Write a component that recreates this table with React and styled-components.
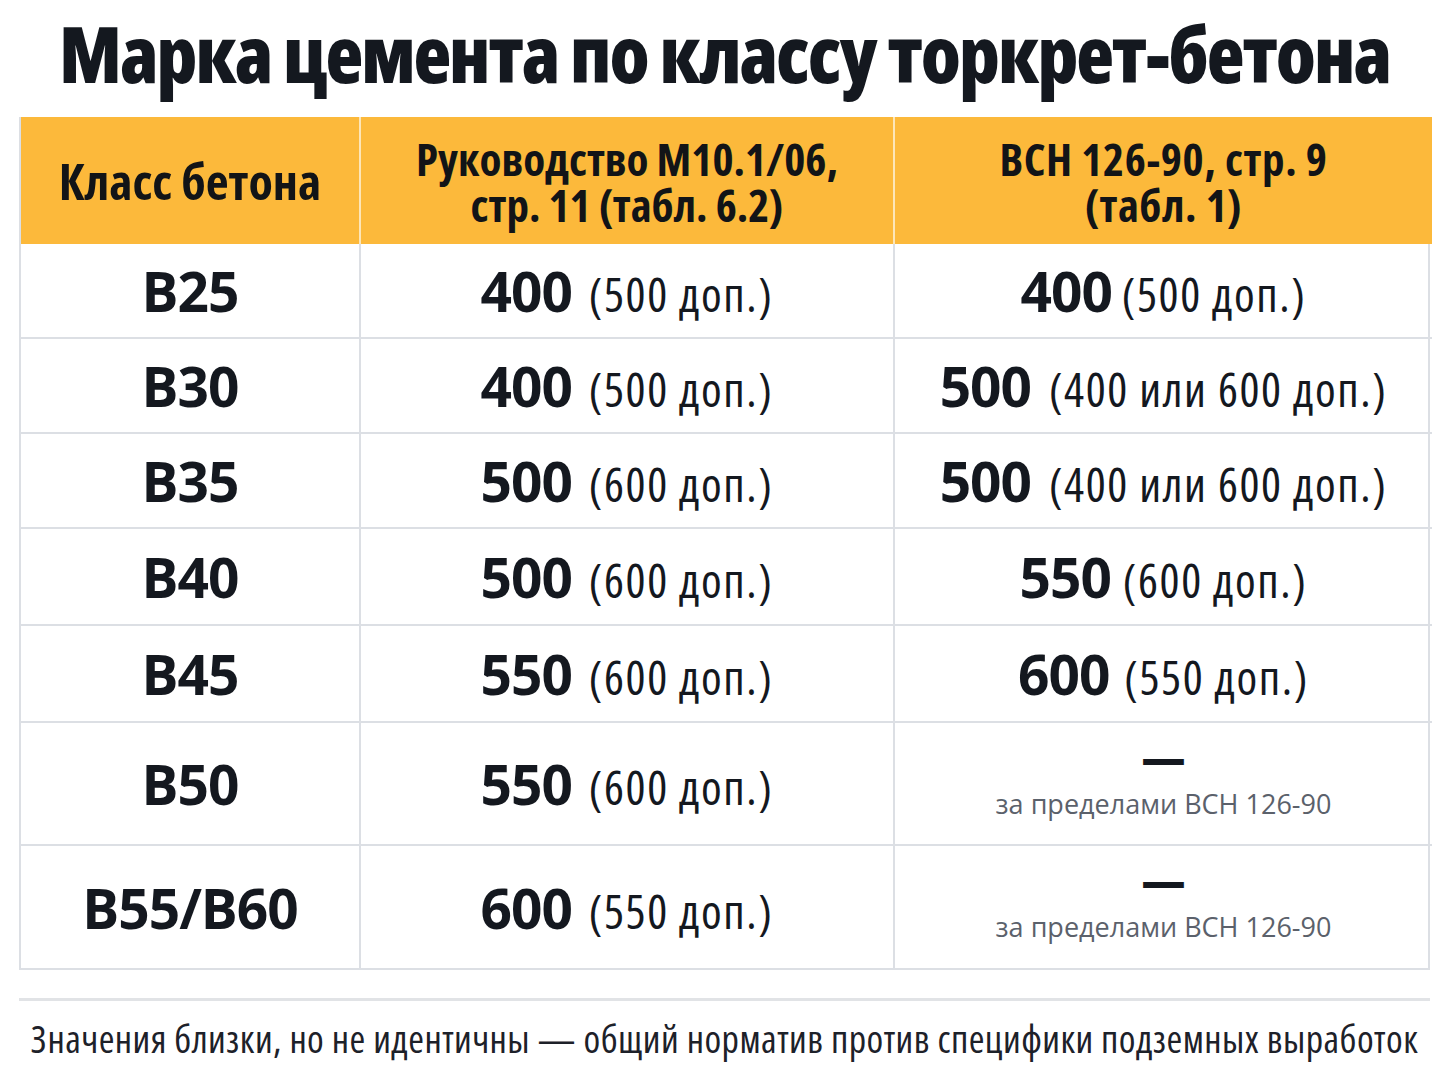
import React from "react";
import styled, { createGlobalStyle } from "styled-components";

const Global = createGlobalStyle`
  html, body { margin: 0; padding: 0; background: #ffffff; }
  body { font-family: "Open Sans", "Noto Sans", "DejaVu Sans", sans-serif; color: #12161d; }
`;

const Page = styled.div`
  width: 1448px;
  height: 1086px;
  box-sizing: border-box;
  padding: 0 18px 0 19px;
  display: flex;
  flex-direction: column;
  align-items: stretch;
`;

const Title = styled.h1`
  margin: 0;
  height: 117px;
  font-size: 78px;
  line-height: 106px;
  font-weight: 800;
  font-stretch: 75%;
  letter-spacing: -2px;
  text-align: center;
  white-space: nowrap;
  color: #14181f;
`;

const Table = styled.div`
  display: grid;
  grid-template-columns: 340px 534px 537px;
  grid-template-rows: 127px 95px 95px 95px 97px 97px 123px 122px;
  border: 2px solid #dcdfe4;
  border-top: none;
  width: 1411px;
  box-sizing: border-box;
`;

const HeadCell = styled.div`
  background: #fcb93b;
  display: flex;
  flex-direction: column;
  align-items: center;
  justify-content: center;
  text-align: center;
  font-size: ${(p) => (p.$big ? "50px" : "45px")};
  font-weight: 700;
  font-stretch: 75%;
  letter-spacing: ${(p) => (p.$wide ? "0.6px" : "0")};
  color: #121417;
  border-right: ${(p) => (p.$last ? "none" : "2px solid #fde6b8")};
  padding-top: ${(p) => (p.$big ? "0" : "2px")};
  box-sizing: border-box;
`;

const HeadLine = styled.span`
  display: block;
  line-height: 46px;
  white-space: nowrap;
`;

const Cell = styled.div`
  display: flex;
  flex-direction: column;
  align-items: center;
  justify-content: center;
  text-align: center;
  border-right: ${(p) => (p.$last ? "none" : "2px solid #dcdfe4")};
  border-bottom: ${(p) => (p.$bottom ? "none" : "2px solid #dcdfe4")};
  box-sizing: border-box;
`;

const ClassName = styled.span`
  font-size: 55px;
  font-weight: 700;
  letter-spacing: -1px;
  color: #14181f;
  line-height: 1;
`;

const Value = styled.div`
  display: flex;
  align-items: baseline;
  justify-content: center;
  gap: ${(p) => p.$gap}px;
  white-space: nowrap;
`;

const Main = styled.span`
  font-size: 55px;
  font-weight: 700;
  letter-spacing: -1px;
  color: #14181f;
  line-height: 1;
`;

const Note = styled.span`
  font-size: 47px;
  font-weight: 400;
  font-stretch: 75%;
  letter-spacing: 1.6px;
  color: #14181f;
  line-height: 1;
`;

const Dash = styled.span`
  font-size: 44px;
  font-weight: 800;
  line-height: 34px;
  color: #14181f;
  margin-top: -6px;
  margin-bottom: 12px;
`;

const Outside = styled.span`
  font-size: 27px;
  font-weight: 400;
  color: #5b616b;
  line-height: 36px;
`;

const Divider = styled.hr`
  margin: 28px 0 0 0;
  width: 1411px;
  border: none;
  height: 3px;
  background: #e1e3e6;
`;

const Footer = styled.p`
  margin: 13px 0 0 0;
  text-align: center;
  font-size: 38px;
  line-height: 48px;
  font-weight: 400;
  font-stretch: 75%;
  letter-spacing: 0.45px;
  color: #1d2129;
  width: 1411px;
  white-space: nowrap;
`;

const rows = [
  { c: "B25", a: ["400", "(500 доп.)"], b: ["400", "(500 доп.)"], gb: 10 },
  { c: "B30", a: ["400", "(500 доп.)"], b: ["500", "(400 или 600 доп.)"], gb: 18 },
  { c: "B35", a: ["500", "(600 доп.)"], b: ["500", "(400 или 600 доп.)"], gb: 18 },
  { c: "B40", a: ["500", "(600 доп.)"], b: ["550", "(600 доп.)"], gb: 12 },
  { c: "B45", a: ["550", "(600 доп.)"], b: ["600", "(550 доп.)"], gb: 15 },
  { c: "B50", a: ["550", "(600 доп.)"], b: null },
  { c: "B55/B60", a: ["600", "(550 доп.)"], b: null },
];

export default function App() {
  return (
    <>
      <Global />
      <Page>
        <Title>Марка цемента по классу торкрет-бетона</Title>
        <Table>
          <HeadCell $big>
            <HeadLine>Класс бетона</HeadLine>
          </HeadCell>
          <HeadCell>
            <HeadLine>Руководство М10.1/06,</HeadLine>
            <HeadLine>стр. 11 (табл. 6.2)</HeadLine>
          </HeadCell>
          <HeadCell $last $wide>
            <HeadLine>ВСН 126-90, стр. 9</HeadLine>
            <HeadLine>(табл. 1)</HeadLine>
          </HeadCell>
          {rows.map((r, i) => {
            const bottom = i === rows.length - 1;
            return (
              <React.Fragment key={r.c}>
                <Cell $bottom={bottom}>
                  <ClassName>{r.c}</ClassName>
                </Cell>
                <Cell $bottom={bottom}>
                  <Value $gap={17}>
                    <Main>{r.a[0]}</Main>
                    <Note>{r.a[1]}</Note>
                  </Value>
                </Cell>
                <Cell $bottom={bottom} $last>
                  {r.b ? (
                    <Value $gap={r.gb}>
                      <Main>{r.b[0]}</Main>
                      <Note>{r.b[1]}</Note>
                    </Value>
                  ) : (
                    <>
                      <Dash>—</Dash>
                      <Outside>за пределами ВСН 126-90</Outside>
                    </>
                  )}
                </Cell>
              </React.Fragment>
            );
          })}
        </Table>
        <Divider />
        <Footer>Значения близки, но не идентичны — общий норматив против специфики подземных выработок</Footer>
      </Page>
    </>
  );
}
